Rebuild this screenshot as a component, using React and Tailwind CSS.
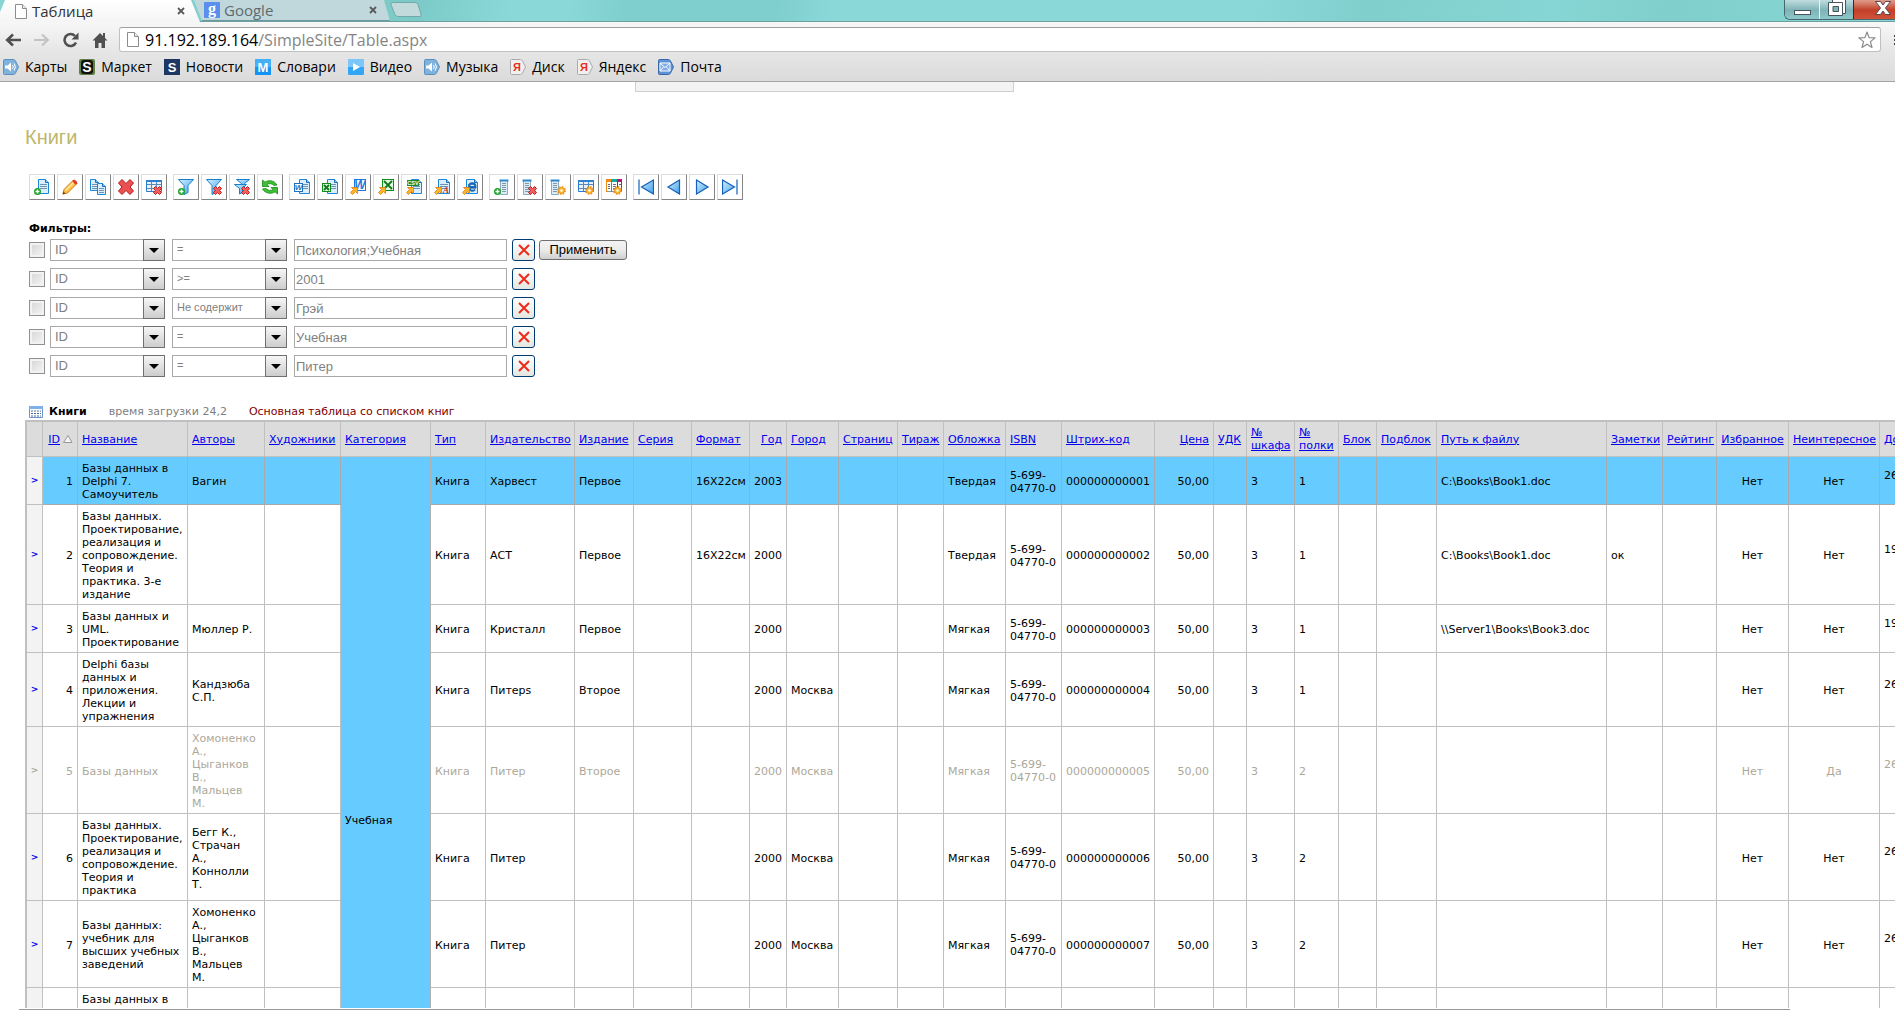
import React from "react";

/* ---------- toolbar icon parts (16x16 grid) ---------- */

const Page = ({ x = 4, y = 0, w = 11, h = 15 }) => (
  <g>
    <path
      d={`M${x + 0.5} ${y + 0.5}h${w - 4}l3 3v${h - 4}h-${w - 1}z`}
      fill="#d9efff"
      stroke="#1c86d8"
    />
    <path d={`M${x + w - 3.5} ${y + 0.5}v3h3`} fill="#8ecbf7" stroke="#1c6fc0" />
    <path
      d={`M${x + 2} ${y + 5.5}h${w - 4}M${x + 2} ${y + 7.5}h${w - 4}M${x + 2} ${y + 9.5}h${w - 4}`}
      stroke="#6d93b5"
    />
  </g>
);

const Strip = ({ x = 5 }) => (
  <g>
    <path d={`M${x + 0.5} 1v14.5h7V1`} fill="#dcecf6" stroke="#8fa9bb" />
    <path d={`M${x - 0.5} 1.5h9`} stroke="#2f86c8" strokeWidth="2" />
    <path d={`M${x + 2} 4.500h4M${x + 2} 6.5h4M${x + 2} 8.5h4M${x + 2} 10.5h4M${x + 2} 12.5h4`} stroke="#7f98aa" />
  </g>
);

const Plus = () => (
  <g>
    <circle cx="3.500" cy="12.5" r="3.500" fill="#1fa32a" />
    <path d="M3.500 10.500v4M1.500 12.500h4" stroke="#fff" strokeWidth="1.4" />
  </g>
);

const Cross = ({ x = 7, y = 7 }) => (
  <g transform={`translate(${x} ${y})`}>
    <path
      d="M2.500 0.500L4.500 2.500L6.500 0.500L8.500 2.500L6.700 4.500L8.500 6.500L6.500 8.500L4.500 6.600L2.500 8.500L0.500 6.500L2.400 4.500L0.500 2.500Z"
      fill="#f06060"
      stroke="#c01818"
    />
  </g>
);

const Arrow = () => (
  <path d="M1.500 8.500h6v6l-2-2l-3 3l-2-2l3-3z" fill="#ffb32e" stroke="#e07c00" strokeWidth="0.8" />
);

const Gear = () => (
  <g>
    <circle cx="11.500" cy="11.500" r="3" fill="#ffb83a" stroke="#ef9413" strokeWidth="1" />
    <circle cx="11.500" cy="11.500" r="3.700" fill="none" stroke="#ef9413" strokeWidth="1.600" strokeDasharray="1.500 1.400" />
    <circle cx="11.500" cy="11.500" r="1.200" fill="#fff" />
  </g>
);

const Grid = () => (
  <g>
    <path d="M0.500 1.500h15v11h-15z" fill="#e3f2fd" stroke="#2a7ac8" />
    <path d="M0 2h16" stroke="#2f80d0" strokeWidth="2" />
    <path d="M1 5.500h14M1 9.500h14M5.500 3v9M10.500 3v9" stroke="#5d88b5" />
  </g>
);

const Funnel = () => (
  <path d="M0.500 0.500h15l-5.500 6v7l-4 2v-9z" fill="url(#gBlue)" stroke="#1580cf" />
);

const Tile = ({ x, y, s, fill, fs }) => (
  <g>
    <rect x={x + 0.5} y={y + 0.5} width={s} height={s} fill="#fff" stroke={fill} />
    <text
      x={x + 0.5 + s / 2}
      y={y + s - 1}
      textAnchor="middle"
      fontFamily="Liberation Sans, sans-serif"
      fontWeight="700"
      fontStyle="italic"
      fontSize={fs}
      fill={fill}
    >
      W
    </text>
  </g>
);

const GreenX = ({ x, y, s }) => (
  <g>
    <rect x={x + 0.5} y={y + 0.5} width={s} height={s} fill="#e5f7e5" stroke="#128a1c" />
    <path
      d={`M${x + 2} ${y + 2}L${x + s - 1} ${y + s - 1}M${x + s - 1} ${y + 2}L${x + 2} ${y + s - 1}`}
      stroke="#0c7a18"
      strokeWidth="1.800"
    />
  </g>
);

const icons = {
  add: <><Page /><Plus /></>,
  edit: (
    <g>
      <path d="M1 15l1-4.500L11.500 1l3.500 3.500L5.500 14z" fill="#ffc24a" stroke="#c77a10" />
      <path d="M3.500 11.500L12 3" stroke="#ffe6a8" strokeWidth="1.500" />
      <path d="M11.500 1c1-1 4.500 2 3.500 3.500l-1.500 1.200L10.300 2.300z" fill="#e23a2a" />
      <path d="M0.500 15.500l1-3 2 2z" fill="#704010" />
    </g>
  ),
  copy: <><Page x={0} y={0} w={9} h={12} /><Page x={7} y={4} w={9} h={12} /></>,
  remove: (
    <path
      d="M4 0.500L8 4.500L12 0.500L15.500 4L12 8L15.500 12L12 15.500L8 11.500L4 15.500L0.500 12L4 8L0.500 4Z"
      fill="#ea5252"
      stroke="#b81818"
    />
  ),
  gridRemove: <><Grid /><Cross /></>,
  filterAdd: <><Funnel /><Plus /></>,
  filterRemove: <><Funnel /><Cross /></>,
  filterClear: (
    <>
      <path d="M2.500 0.500h13l-5 4v3h-3v-3z" fill="url(#gBlue)" stroke="#1580cf" />
      <path d="M0.500 5.500h12l-4 4v4l-3 1.500v-5.500z" fill="url(#gBlue)" stroke="#1580cf" />
      <Cross />
    </>
  ),
  refresh: (
    <g fill="#3fbf35" stroke="#138a18" strokeWidth="0.800">
      <path d="M0.500 1v6.500h6.500l-2-2c2-1.500 5-1 7 1l3-0.500C12.500 1.500 6.500 0.500 3 3.200z" />
      <path d="M15.500 15V8.500H9l2 2c-2 1.500-5 1-7-1l-3.500 0.500C3 14.500 9.500 15.500 13 12.800z" />
    </g>
  ),
  word: <><Page x={5} y={0} w={11} h={15} /><Tile x={0} y={4} s={8} fill="#1f6fc4" fs={8} /></>,
  excel: <><Page x={5} y={0} w={11} h={15} /><GreenX x={0} y={4} s={8} /></>,
  toWord: <><Tile x={4} y={0} s={11} fill="#1f7ae0" fs={12} /><Arrow /></>,
  toExcel: <><GreenX x={4} y={0} s={11} /><Arrow /></>,
  toCsv: (
    <>
      <Page x={5} y={0} w={11} h={15} />
      <rect x="1" y="1" width="12" height="6" fill="#1c8a2a" />
      <text x="7" y="6.200" textAnchor="middle" fontFamily="Liberation Sans, sans-serif" fontWeight="700" fontSize="5.500" fill="#fff">CSV</text>
      <Arrow />
    </>
  ),
  toPdf: (
    <>
      <Page x={4} y={0} w={12} h={15} />
      <text x="12" y="14" textAnchor="middle" fontFamily="Liberation Serif, serif" fontWeight="700" fontStyle="italic" fontSize="9" fill="#d83018">A</text>
      <Arrow />
    </>
  ),
  toHtml: (
    <>
      <Page x={4} y={0} w={12} h={15} />
      <path d="M7 8h6.500c0-5-6-5-6.500-0.500c0 5 4.500 5 6 3" fill="none" stroke="#1768b8" strokeWidth="2" />
      <Arrow />
    </>
  ),
  colAdd: <><Strip x={6} /><Plus /></>,
  colRemove: <><Strip x={1} /><Cross x={6} y={7} /></>,
  colSet: <><Strip x={1} /><Gear /></>,
  gridSet: <><Grid /><Gear /></>,
  colorSet: (
    <>
      <path d="M0.500 1.500h15v11h-15z" fill="#fff" stroke="#7aa0b0" />
      <path d="M0 1.500h5" stroke="#f08a18" strokeWidth="3" />
      <path d="M5 1.500h6" stroke="#18a8a0" strokeWidth="3" />
      <path d="M11 1.500h5" stroke="#b01878" strokeWidth="3" />
      <path d="M5.500 3v10" stroke="#18a8a0" />
      <path d="M11.500 3v9M15.500 3v9" stroke="#b01878" />
      <path d="M0.500 3v10" stroke="#f08a18" />
      <path d="M2 5.500h2M2 7.500h2M2 9.500h2M7 5.500h3M7 7.500h3M7 9.500h3M13 5.500h2" stroke="#668" />
      <Gear />
    </>
  ),
  first: <path d="M1 0.500v15M15.500 1L3.500 8L15.500 15z" fill="url(#gBlue)" stroke="#1560b8" strokeWidth="1.200" />,
  prev: <path d="M13.500 1L2 8L13.500 15z" fill="url(#gBlue)" stroke="#1560b8" strokeWidth="1.200" />,
  next: <path d="M2.500 1L14 8L2.500 15z" fill="url(#gBlue)" stroke="#1560b8" strokeWidth="1.200" />,
  last: <path d="M15 0.500v15M0.500 1L12.500 8L0.500 15z" fill="url(#gBlue)" stroke="#1560b8" strokeWidth="1.200" />,
};

const toolGroups = [
  [["add", "Добавить"], ["edit", "Изменить"], ["copy", "Копировать"], ["remove", "Удалить"], ["gridRemove", "Очистить таблицу"]],
  [["filterAdd", "Добавить фильтр"], ["filterRemove", "Удалить фильтр"], ["filterClear", "Удалить все фильтры"], ["refresh", "Обновить"]],
  [["word", "Word"], ["excel", "Excel"], ["toWord", "Экспорт в Word"], ["toExcel", "Экспорт в Excel"], ["toCsv", "Экспорт в CSV"], ["toPdf", "Экспорт в PDF"], ["toHtml", "Экспорт в HTML"]],
  [["colAdd", "Добавить столбец"], ["colRemove", "Удалить столбец"], ["colSet", "Настроить столбец"], ["gridSet", "Настроить таблицу"], ["colorSet", "Настроить цвета"]],
  [["first", "Первая"], ["prev", "Предыдущая"], ["next", "Следующая"], ["last", "Последняя"]],
];

function Toolbar() {
  return (
    <div className="flex gap-1.5">
      {toolGroups.map((group, i) => (
        <div key={i} className="flex gap-0.5">
          {group.map(([id, label]) => (
            <button
              key={id}
              type="button"
              aria-label={label}
              className="flex size-[26px] items-center justify-center border border-t-[#dcdcdc] border-l-[#dcdcdc] border-r-[#858585] border-b-[#858585] bg-white"
            >
              <svg viewBox="0 0 16 16" className="size-4" fill="none">{icons[id]}</svg>
            </button>
          ))}
        </div>
      ))}
    </div>
  );
}

/* ---------- browser frame ---------- */

const PageIcon = () => (
  <svg viewBox="0 0 12 15" className="h-[15px] w-3 shrink-0" fill="#fff" stroke="#8c8c8c">
    <path d="M0.500 0.500h7l4 4v10h-11z" />
    <path d="M7.500 0.500v4h4" fill="#eee" />
  </svg>
);

const CloseX = () => (
  <svg viewBox="0 0 8 8" className="size-2" stroke="#5a5a5a" strokeWidth="1.800">
    <path d="M1 1l6 6M7 1l-6 6" />
  </svg>
);

function TabStrip() {
  return (
    <div className="flex h-[21px] items-start bg-[linear-gradient(100deg,#86d5d3_0%,#7ccac8_22%,#8ad9d8_27%,#8ad9d8_30%,#7fcfce_33%,#7fcfce_41%,#8bd8d9_44%,#8bd8d9_66%,#80cfcd_72%,#86d6d5_82%,#80cfcc_88%,#86d7d6_100%)]">
      <div className="flex h-[22px] w-[200px] shrink-0 items-center bg-gradient-to-b from-white to-[#f5f5f5] pr-[11px] pl-[15px] [clip-path:polygon(5px_0,191px_0,200px_100%,0_100%,0_12px)]">
        <PageIcon />
        <span className="ml-[5px] grow text-[15px] leading-5 text-[#333]">Таблица</span>
        <button type="button" aria-label="Закрыть вкладку" className="mr-1"><CloseX /></button>
      </div>
      <div className="-ml-1.5 flex h-[21px] w-[196px] shrink-0 items-center border-b border-[#6a9a9d] bg-[#c0d8dc] pr-[13px] pl-2.5 [clip-path:polygon(0_0,190px_0,100%_100%,8px_100%)]">
        <svg viewBox="0 0 16 16" className="size-4 shrink-0">
          <rect width="16" height="16" rx="1" fill="#5a8fee" />
          <text x="8" y="12" textAnchor="middle" fontFamily="Liberation Serif, serif" fontWeight="700" fontSize="16" fill="#fff">g</text>
        </svg>
        <span className="ml-1 grow text-[15px] leading-5 text-[#5d6b70]">Google</span>
        <button type="button" aria-label="Закрыть вкладку"><CloseX /></button>
      </div>
      <svg viewBox="0 0 32 16" className="mt-0.5 h-4 w-8 shrink-0">
        <path d="M2 0.500h23q2 0 3 2l3 10q0.500 2-1 2h-22q-2 0-3-2l-4-10q0-2 1-2z" fill="#c3dadd" stroke="#74a9aa" />
      </svg>
      <div className="grow" />
      <div className="flex h-5 overflow-hidden rounded-bl-md border-b border-l border-[#48686d]">
        <button type="button" aria-label="Свернуть" className="flex h-5 w-[35px] items-start justify-center border-r border-[#e6f3f3] bg-gradient-to-b from-[#c0dde0] via-[#7fb3b7] to-[#8fc9cc] pt-2.5">
          <span className="h-[5px] w-[17px] border border-[#48555f] bg-white" />
        </button>
        <button type="button" aria-label="Развернуть" className="flex h-5 w-[33px] items-start justify-center bg-gradient-to-b from-[#c0dde0] via-[#7fb3b7] to-[#8fc9cc]">
          <svg viewBox="0 0 18 16" className="h-4 w-[18px]" fill="#fff" stroke="#48555f">
            <path d="M4.500 -2v15.500h13V-2z" />
            <path d="M0.500 2.500h14v13h-14z" />
            <path d="M5 6.500h5.500v5h-5.500z" fill="#7fb3b7" />
          </svg>
        </button>
        <button type="button" aria-label="Закрыть" className="flex h-5 w-[42px] items-start justify-end border-l border-[#5e1a14] bg-gradient-to-b from-[#dc9c8a] via-[#c23e28] to-[#d2553a] pr-1">
          <svg viewBox="0 0 16 14" className="mt-px h-3.5 w-4" fill="#fff" stroke="#5a4750">
            <path d="M0.500 0.500h5l2.500 3.500l2.500-3.500h5l-5 6.500l5 6.500h-5l-2.500-3.500l-2.500 3.500h-5l5-6.500z" />
          </svg>
        </button>
      </div>
    </div>
  );
}

function AddressBar() {
  return (
    <div className="flex items-center pt-[5px]">
      <div className="flex w-[119px] shrink-0 items-center gap-[13px] pl-[5px]">
        <button type="button" aria-label="Назад">
          <svg viewBox="0 0 16 14" className="h-3.5 w-4" fill="none" stroke="#505050" strokeWidth="2.600"><path d="M16 7H3M8 1.500L2.200 7L8 12.500" /></svg>
        </button>
        <button type="button" aria-label="Вперёд">
          <svg viewBox="0 0 16 14" className="h-3.5 w-4" fill="none" stroke="#c3c3c3" strokeWidth="2.200"><path d="M0 7h13M8 1.500L13.800 7L8 12.500" /></svg>
        </button>
        <button type="button" aria-label="Обновить страницу">
          <svg viewBox="0 0 16 16" className="size-4" fill="none" stroke="#505050" strokeWidth="2.600"><path d="M13 10.500A6 6 0 1 1 12 4" /><path d="M15.500 0.500v7h-7z" fill="#505050" stroke="none" /></svg>
        </button>
        <button type="button" aria-label="Домой">
          <svg viewBox="0 0 16 16" className="size-4" fill="#505050"><path d="M8 1L0.500 8.500h2.500V16h3.500v-5h3v5H13V8.500h2.500L13 6V1h-2v3z" /></svg>
        </button>
      </div>
      <div className="flex h-[25px] grow items-center rounded-[3px] border border-[#c0c0c0] border-t-[#a0a0a0] bg-white pr-1 pl-[7px]">
        <PageIcon />
        <a href="#address" className="ml-1.5 grow text-[16px] leading-[22px] text-[#858585]">
          <span className="text-black">91.192.189.164</span>/SimpleSite/Table.aspx
        </a>
        <svg viewBox="0 0 18 18" className="size-[18px]" fill="#fff" stroke="#8a8a8a" strokeWidth="1.200" strokeLinejoin="round">
          <path d="M9 1l2.100 5.600l6 .3l-4.700 3.700l1.600 5.900L9 13.200l-5 3.300l1.600-5.900L0.900 6.900l6-.3z" />
        </svg>
      </div>
      <div className="flex w-3.5 shrink-0 flex-col items-end gap-0.5">
        <span className="h-0.5 w-px bg-[#444]" /><span className="h-0.5 w-px bg-[#444]" /><span className="h-0.5 w-px bg-[#444]" />
      </div>
    </div>
  );
}

const Shield = ({ fill, stroke, children }) => (
  <>
    <path d="M1.500 0.500h9q1 0 2 1.500l3 6l-3 6q-1 1.500-2 1.500h-9q-1 0-1-1v-13q0-1 1-1z" fill={fill} stroke={stroke} />
    {children}
  </>
);

const Speaker = () => (
  <Shield fill="#7fb2dc" stroke="#5b8fc0">
    <path d="M2 6.500h2.500l3.500-3v9l-3.500-3H2z" fill="#fff" />
    <path d="M9.500 6q1.500 2 0 4M11.200 4.500q2.300 3.500 0 7" fill="none" stroke="#fff" />
  </Shield>
);

const Letter = ({ ch, fill, size = 13, x = 8, y = 12.5 }) => (
  <text x={x} y={y} textAnchor="middle" fontFamily="Liberation Sans, sans-serif" fontWeight="700" fontSize={size} fill={fill}>{ch}</text>
);

const Yandex = () => (
  <Shield fill="#f0f0f0" stroke="#aaa"><Letter ch="Я" fill="#e8301c" size={11} x={7} y={12} /></Shield>
);

const bookmarks = [
  ["Карты", <Speaker key="i" />],
  ["Маркет", <g key="i"><rect width="16" height="16" rx="2" fill="#5f7f45" /><rect x="2" y="1" width="12" height="14" rx="3" fill="#111" /><Letter ch="S" fill="#fff" size={14} y={13} /></g>],
  ["Новости", <g key="i"><rect width="16" height="16" fill="#1d3663" /><Letter ch="S" fill="#fff" /></g>],
  ["Словари", <g key="i"><rect width="16" height="16" fill="#1593f2" /><rect width="16" height="8" fill="#45b0f8" /><Letter ch="M" fill="#fff" /></g>],
  ["Видео", <g key="i"><rect width="16" height="16" rx="1" fill="#33a7f5" /><rect width="16" height="8" fill="#7cc6fa" /><path d="M5 4l7 4l-7 4z" fill="#fff" /></g>],
  ["Музыка", <Speaker key="i" />],
  ["Диск", <Yandex key="i" />],
  ["Яндекс", <Yandex key="i" />],
  ["Почта", <Shield key="i" fill="#5c92d8" stroke="#3a68a8"><path d="M2 4h10v8H2z" fill="#7cabe8" stroke="#fff" /><path d="M2 4l5 4.500L12 4M2 12l3.500-4M12 12l-3.500-4" fill="none" stroke="#fff" /></Shield>],
];

function Bookmarks() {
  return (
    <nav className="flex h-[29px] items-center gap-3 pl-[3px]">
      {bookmarks.map(([name, icon]) => (
        <a key={name} href="#bookmark" className="flex items-center gap-1.5 text-[14px] leading-5 text-black">
          <svg viewBox="0 0 16 16" className="size-4 shrink-0">{icon}</svg>
          {name}
        </a>
      ))}
    </nav>
  );
}

/* ---------- filters ---------- */

const filters = [
  ["=", "Психология;Учебная"],
  [">=", "2001"],
  ["Не содержит", "Грэй"],
  ["=", "Учебная"],
  ["=", "Питер"],
];

function Dropdown({ label, value, small }) {
  return (
    <div className="relative h-[22px] w-[115px]">
      <select
        aria-label={label}
        defaultValue={value}
        className={`block h-[22px] w-full appearance-none border border-[#a9a9a9] bg-white pb-0.5 pl-1 text-[#808080] ${small ? "text-[11px]" : "text-[13px]"}`}
      >
        <option>{value}</option>
      </select>
      <span className="pointer-events-none absolute top-0 right-0 flex h-[22px] w-[22px] items-center justify-center border border-[#707070] bg-gradient-to-b from-[#f6f6f6] to-[#cdcdcd]">
        <svg viewBox="0 0 10 5" className="h-[5px] w-2.5"><path d="M0 0h10L5 5z" fill="#000" /></svg>
      </span>
    </div>
  );
}

function Filters() {
  return (
    <section className="font-['Liberation_Sans',Arial,sans-serif]">
      <h2 className="font-['DejaVu_Sans',Verdana,sans-serif] text-[11px] leading-[13px] font-bold text-black">Фильтры:</h2>
      <div className="mt-1 flex flex-col gap-[7px]">
        {filters.map(([op, value], i) => (
          <div key={i} className="flex h-[22px] items-center">
            <input
              type="checkbox"
              aria-label={`Фильтр ${i + 1}`}
              className="mr-[5px] size-4 appearance-none border border-[#909090] bg-gradient-to-br from-[#d4d4d4] to-[#f6f6f6] shadow-[inset_0_0_0_2px_#f2f2f2]"
            />
            <Dropdown label="Поле" value="ID" />
            <div className="w-[7px]" />
            <Dropdown label="Условие" value={op} small />
            <input
              type="text"
              aria-label="Значение"
              defaultValue={value}
              className="mr-[5px] ml-[7px] h-[22px] w-[213px] border border-[#a9a9a9] bg-white px-px text-[13px] text-[#808080]"
            />
            <button
              type="button"
              aria-label="Удалить фильтр"
              className="flex h-[22px] w-[23px] items-center justify-center rounded-[3px] border border-[#003c74] bg-gradient-to-b from-white to-[#e6e6e0]"
            >
              <svg viewBox="0 0 12 12" className="size-3" stroke="#ee2a1a" strokeWidth="2"><path d="M1 1l10 10M11 1L1 11" /></svg>
            </button>
            {i === 0 && (
              <button
                type="button"
                className="ml-1 h-5 w-[88px] rounded-[3px] border border-[#707070] bg-gradient-to-b from-[#f3f3f3] via-[#ebebeb] to-[#cfcfcf] text-[13px] leading-4 text-black"
              >
                Применить
              </button>
            )}
          </div>
        ))}
      </div>
    </section>
  );
}

/* ---------- table ---------- */

const columns = [
  ["ID", "w-[35px]", "text-right"],
  ["Название", "w-[110px]", ""],
  ["Авторы", "w-[77px]", ""],
  ["Художники", "w-[76px]", ""],
  ["Категория", "w-[90px]", ""],
  ["Тип", "w-[55px]", ""],
  ["Издательство", "w-[89px]", ""],
  ["Издание", "w-[59px]", ""],
  ["Серия", "w-[58px]", ""],
  ["Формат", "w-[58px]", ""],
  ["Год", "w-[37px]", "text-right"],
  ["Город", "w-[52px]", ""],
  ["Страниц", "w-[59px]", ""],
  ["Тираж", "w-[46px]", ""],
  ["Обложка", "w-[62px]", ""],
  ["ISBN", "w-[56px]", ""],
  ["Штрих-код", "w-[93px]", ""],
  ["Цена", "w-[59px]", "text-right"],
  ["УДК", "w-[33px]", ""],
  ["№\nшкафа", "w-[48px]", ""],
  ["№\nполки", "w-[44px]", ""],
  ["Блок", "w-[38px]", ""],
  ["Подблок", "w-[60px]", ""],
  ["Путь к файлу", "w-[170px]", ""],
  ["Заметки", "w-[56px]", ""],
  ["Рейтинг", "w-[54px]", ""],
  ["Избранное", "w-[72px]", "text-center"],
  ["Неинтересное", "w-[91px]", "text-center"],
  ["До", "w-[90px]", ""],
];

const isbn = "5-699-\n04770-0";

const row = (id, title, authors, publisher, edition, format, year, city, cover, shelf, path, notes, dull, date) => ({
  id,
  cells: [
    String(id), title, authors, "", null, "Книга", publisher, edition, "", format, year, city, "", "",
    cover, isbn, `00000000000${id}`, "50,00", "", "3", shelf, "", "", path, notes, "", "Нет", dull, `${date}\n `,
  ],
});

const rows = [
  row(1, "Базы данных в\nDelphi 7.\nСамоучитель", "Вагин", "Харвест", "Первое", "16X22см", "2003", "", "Твердая", "1", "C:\\Books\\Book1.doc", "", "Нет", "26"),
  row(2, "Базы данных.\nПроектирование,\nреализация и\nсопровождение.\nТеория и\nпрактика. 3-е\nиздание", "", "АСТ", "Первое", "16X22см", "2000", "", "Твердая", "1", "C:\\Books\\Book1.doc", "ок", "Нет", "19"),
  row(3, "Базы данных и\nUML.\nПроектирование", "Мюллер Р.", "Кристалл", "Первое", "", "2000", "", "Мягкая", "1", "\\\\Server1\\Books\\Book3.doc", "", "Нет", "19"),
  row(4, "Delphi базы\nданных и\nприложения.\nЛекции и\nупражнения", "Кандзюба\nС.П.", "Питерs", "Второе", "", "2000", "Москва", "Мягкая", "1", "", "", "Нет", "26"),
  row(5, "Базы данных", "Хомоненко\nА.,\nЦыганков\nВ.,\nМальцев\nМ.", "Питер", "Второе", "", "2000", "Москва", "Мягкая", "2", "", "", "Да", "26"),
  row(6, "Базы данных.\nПроектирование,\nреализация и\nсопровождение.\nТеория и\nпрактика", "Бегг К.,\nСтрачан\nА.,\nКоннолли\nТ.", "Питер", "", "", "2000", "Москва", "Мягкая", "2", "", "", "Нет", "26"),
  row(7, "Базы данных:\nучебник для\nвысших учебных\nзаведений", "Хомоненко\nА.,\nЦыганков\nВ.,\nМальцев\nМ.", "Питер", "", "", "2000", "Москва", "Мягкая", "2", "", "", "Нет", "26"),
];

function BookTable() {
  return (
    <table className="w-px table-fixed border-separate border-spacing-0 border-t-2 border-l-2 border-[#c0c0c0] text-[11px] leading-[13px] whitespace-pre text-black">
      <colgroup>
        <col className="w-4" />
        {columns.map(([name, width]) => <col key={name} className={width} />)}
      </colgroup>
      <thead>
        <tr className="h-[35px] bg-[#dcdcdc]">
          <th className="border-r border-b border-[#c0c0c0]" />
          {columns.map(([name, , align]) => (
            <th
              key={name}
              className={`border-r border-b border-[#c0c0c0] px-1 py-1 font-normal ${align || "text-left"}`}
            >
              <a href="#sort" className="text-[#0000ee] underline">{name}</a>
              {name === "ID" && (
                <svg viewBox="0 0 10 8" className="ml-[3px] inline h-2 w-2.5 align-baseline" fill="#f4f4f4" stroke="#999"><path d="M5 0.500L9 7.500H0.500z" /></svg>
              )}
            </th>
          ))}
        </tr>
      </thead>
      <tbody>
        {rows.map(({ id, cells }) => (
          <tr key={id} className={id === 1 ? "bg-[#66ccff]" : id === 5 ? "text-[#aca899]" : ""}>
            <td className="border-r border-b border-[#c0c0c0] bg-[#f3f3f3] text-center text-[9px] font-bold">
              <a href="#row" className={id === 5 ? "text-[#aca899]" : "text-[#0000ee]"}>&gt;</a>
            </td>
            {cells.map((text, c) => {
              if (c === 4) {
                return id === 1 ? (
                  <td key={c} rowSpan={8} className="border-r border-b border-[#b0b0b0] bg-[#66ccff] px-1">Учебная</td>
                ) : null;
              }
              return (
                <td
                  key={c}
                  className={`border-r border-b px-1 pt-[5px] pb-[3px] ${id === 1 ? "border-[#a9a9a9]" : "border-[#c0c0c0]"} ${columns[c][2]}`}
                >
                  {text}
                </td>
              );
            })}
          </tr>
        ))}
        <tr className="h-[197px] align-top">
          <td className="border-r border-[#c0c0c0] bg-[#f3f3f3]" />
          {columns.map(([name], c) =>
            c === 4 ? null : (
              <td key={name} className="border-r border-[#c0c0c0] px-1 pt-[5px] pb-[3px]">
                {c === 1 ? "Базы данных в\nDelphi" : ""}
              </td>
            )
          )}
        </tr>
      </tbody>
    </table>
  );
}

export default function App() {
  return (
    <div className="flex h-screen flex-col overflow-hidden bg-white font-['DejaVu_Sans',Verdana,sans-serif]">
      <svg className="absolute size-0" aria-hidden="true">
        <defs>
          <linearGradient id="gBlue" x1="0" y1="0" x2="1" y2="1">
            <stop offset="0" stopColor="#d8f0ff" />
            <stop offset="1" stopColor="#3d9ee8" />
          </linearGradient>
        </defs>
      </svg>

      <header className="shrink-0 font-['Open_Sans','Noto_Sans',sans-serif]">
        <TabStrip />
        <div className="h-[61px] border-t border-b border-t-[#6f9f9f] border-b-[#a4a4a4] bg-gradient-to-b from-[#f7f7f7] via-[#e6e6e6] to-[#dbdbdb]">
          <AddressBar />
          <Bookmarks />
        </div>
      </header>

      <main className="min-h-0 grow overflow-hidden">
        <div className="ml-[33.500%] h-2.5 w-1/5 border border-t-0 border-[#cfcfcf] bg-[#f3f3f3]" />
        <h1 className="mt-[33px] ml-[25px] font-['Liberation_Sans',Arial,sans-serif] text-[20px] leading-6 text-[#bdb76b]">Книги</h1>
        <div className="mt-[25px] ml-[29px]">
          <Toolbar />
        </div>
        <div className="mt-[22px] ml-[29px]">
          <Filters />
        </div>
        <div className="mt-7 ml-[29px] flex h-[13px] items-center text-[11px] leading-[13px]">
          <svg viewBox="0 0 14 12" className="h-3 w-3.5" fill="none">
            <path d="M0.500 0.500h13v11h-13z" fill="#fff" stroke="#6a96cc" />
            <path d="M0 1.500h14" stroke="#7fb0ea" strokeWidth="3" />
            <path d="M2 5h10M2 7.500h10M2 10h10" stroke="#4a6a96" strokeDasharray="2 1" />
          </svg>
          <h2 className="ml-1.5 font-bold">Книги</h2>
          <span className="ml-[22px] text-[#808080]">время загрузки 24,2</span>
          <span className="ml-[22px] text-[#800000]">Основная таблица со списком книг</span>
        </div>
        <div className="mt-0.5 ml-[25px]">
          <BookTable />
        </div>
      </main>
      <footer className="flex h-0.5 shrink-0 flex-col justify-end bg-white">
        <div className="mr-[105px] ml-[19px] h-px bg-[#979797]" />
      </footer>
    </div>
  );
}
